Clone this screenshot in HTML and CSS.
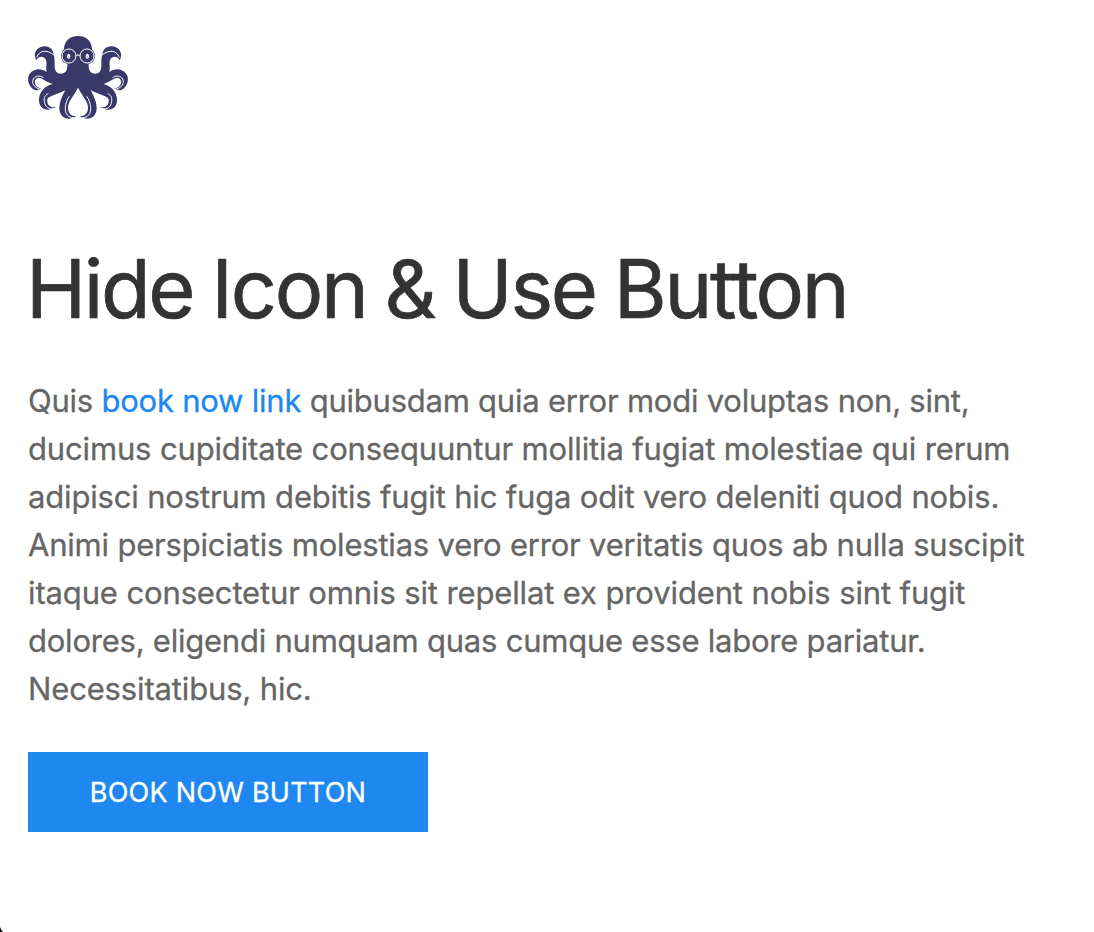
FILE: index.html
```html
<!DOCTYPE html>
<html lang="en">
<head>
<meta charset="utf-8">
<title>Hide Icon &amp; Use Button</title>
<link rel="stylesheet" href="styles.css">
</head>
<body>
<main class="page">
<svg class="logo" viewBox="24 24 300 252" role="img" aria-label="Octopus">
<defs>
<g id="half">
<path class="ink" d="M175 24C145 24 131 43 132 67C132 81 142 90 142 108C143 126 137 137 122 137C107 136 103 123 104 107C104 80 100 55 75 55C53 55 42 73 45 85Q46 93 49 96Q56 84 68 87Q82 90 79 114Q78 122 80 132C61 117 35 124 26 143C19 164 35 187 51 187L63 182C46 178 40 162 48 153C58 141 74 161 98 168C66 175 53 204 58 225C63 247 87 251 108 237C94 240 83 233 82 221C79 204 95 207 136 187C122 211 113 237 121 256C128 274 151 277 168 264C154 266 144 255 144 239C144 219 161 205 174 179L175 179Z"/>
<circle class="ink" cx="147" cy="84" r="24"/>
<path class="line" d="M50 88C58 67 80 63 103 82M59 183C43 179 34 166 40 153C47 142 59 142 70 149M102 241C86 246 75 236 73 221C71 207 77 200 85 197M160 269C145 269 135 258 136 239C137 225 142 213 148 205"/>
<circle class="line" cx="147" cy="84" r="21"/>
<ellipse class="eye" cx="146" cy="85" rx="5" ry="7.5"/>
<circle class="ink" cx="146" cy="86" r="1.5"/>
</g>
</defs>
<use href="#half"/>
<use href="#half" transform="translate(348 0) scale(-1 1)"/>
<path class="line" d="M168 82Q174 80 180 82"/>
</svg>
<h1 class="title">Hide Icon &amp; Use Button</h1>
<p class="copy">
<span class="row row-1">Quis <a class="link">book now link</a> quibusdam quia error modi voluptas non, sint,</span>
<span class="row row-2">ducimus cupiditate consequuntur mollitia fugiat molestiae qui rerum</span>
<span class="row row-3">adipisci nostrum debitis fugit hic fuga odit vero deleniti quod nobis.</span>
<span class="row row-4">Animi perspiciatis molestias vero error veritatis quos ab nulla suscipit</span>
<span class="row row-5">itaque consectetur omnis sit repellat ex provident nobis sint fugit</span>
<span class="row row-6">dolores, eligendi numquam quas cumque esse labore pariatur.</span>
<span class="row row-7">Necessitatibus, hic.</span>
</p>
<a class="button">BOOK NOW BUTTON</a>
</main>
<svg class="corner" viewBox="0 0 3 5" aria-hidden="true"><path d="M0 0Q1 3 3 5H0Z"/></svg>
</body>
</html>
```
FILE: styles.css
```css
body { margin: 0; background: #fff; font-family: Inter, "Liberation Sans", sans-serif; }
.page { box-sizing: border-box; height: 932px; padding: 36px 28px 0; display: flex; flex-direction: column; align-items: flex-start; overflow: hidden; }
.logo { display: block; width: 100px; height: 84px; }
.ink { fill: #393869; }
.line { fill: none; stroke: #fff; stroke-width: 3; }
.eye { fill: #fff; }
.title { margin: 119px 0 0 -2px; font-size: 81px; line-height: 100px; font-weight: 400; letter-spacing: -2.35px; word-spacing: -2.3px; color: #333; white-space: nowrap; -webkit-text-stroke: 0.7px #333; }
.copy { margin: 38px 0 0; font-size: 31px; line-height: 48px; color: #666; -webkit-text-stroke: 0.3px; }
.row { display: block; width: max-content; white-space: nowrap; }
.row-1 { letter-spacing: -0.23px; }
.row-2 { letter-spacing: -0.15px; }
.row-3 { letter-spacing: -0.17px; }
.row-4 { letter-spacing: -0.2px; }
.row-5 { letter-spacing: -0.13px; }
.row-6 { letter-spacing: -0.23px; }
.row-7 { letter-spacing: -0.15px; }
.link { color: #1e87f0; }
.button { display: flex; align-items: center; justify-content: center; width: 400px; height: 80px; margin-top: 39px; background: #1e87f0; color: #fff; font-size: 27px; letter-spacing: 0.25px; -webkit-text-stroke: 0.3px; }
.corner { position: absolute; left: 0; bottom: 0; width: 3px; height: 5px; }
```
